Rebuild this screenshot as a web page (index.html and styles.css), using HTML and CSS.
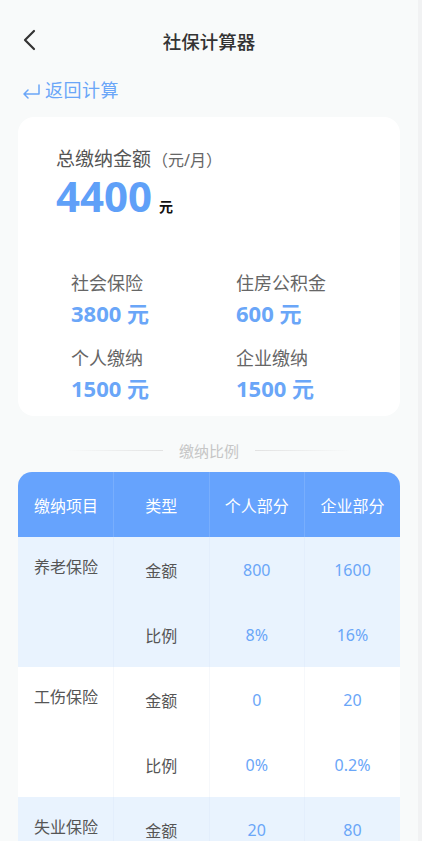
FILE: index.html
```html
<!DOCTYPE html>
<html lang="zh-CN">
<head>
    <meta charset="UTF-8">
    <meta name="viewport" content="width=device-width, initial-scale=1.0">
    <title>社保计算器</title>
    <link rel="stylesheet" href="styles.css">
</head>
<body>
<div class="page">
    <!-- 顶部导航 -->
    <div class="nav">
        <span class="nav-back">
            <svg width="16" height="22" viewBox="0 0 16 22"><path d="M12 2 L3 11 L12 20" fill="none" stroke="#333" stroke-width="2.2" stroke-linecap="round" stroke-linejoin="round"/></svg>
        </span>
        <div class="nav-title">社保计算器</div>
    </div>

    <!-- 返回计算 -->
    <div class="back-link">
        <svg width="20" height="16" viewBox="0 0 20 16"><path d="M18 2 V11 H3 M7 7 L3 11 L7 15" fill="none" stroke="#6aa6f8" stroke-width="1.5" stroke-linecap="round" stroke-linejoin="round"/></svg>
        <span>返回计算</span>
    </div>

    <!-- 总额卡片 -->
    <div class="card">
        <div class="total-label">总缴纳金额<span class="unit-note">（元/月）</span></div>
        <div class="total-value"><span class="num">4400</span><span class="yuan">元</span></div>

        <div class="summary">
            <div class="item">
                <div class="item-label">社会保险</div>
                <div class="item-value">3800 元</div>
            </div>
            <div class="item">
                <div class="item-label">住房公积金</div>
                <div class="item-value">600 元</div>
            </div>
            <div class="item">
                <div class="item-label">个人缴纳</div>
                <div class="item-value">1500 元</div>
            </div>
            <div class="item">
                <div class="item-label">企业缴纳</div>
                <div class="item-value">1500 元</div>
            </div>
        </div>
    </div>

    <!-- 分隔标题 -->
    <div class="divider">
        <span class="line line-left"></span>
        <span class="divider-text">缴纳比例</span>
        <span class="line line-right"></span>
    </div>

    <!-- 比例表格 -->
    <div class="table-wrap">
        <table class="rate-table">
            <thead>
                <tr>
                    <th class="col-name">缴纳项目</th>
                    <th>类型</th>
                    <th>个人部分</th>
                    <th>企业部分</th>
                </tr>
            </thead>
            <tbody>
                <tr class="odd">
                    <td class="col-name" rowspan="2">养老保险</td>
                    <td class="type">金额</td>
                    <td class="val">800</td>
                    <td class="val">1600</td>
                </tr>
                <tr class="odd">
                    <td class="type">比例</td>
                    <td class="val">8%</td>
                    <td class="val">16%</td>
                </tr>
                <tr>
                    <td class="col-name" rowspan="2">工伤保险</td>
                    <td class="type">金额</td>
                    <td class="val">0</td>
                    <td class="val">20</td>
                </tr>
                <tr>
                    <td class="type">比例</td>
                    <td class="val">0%</td>
                    <td class="val">0.2%</td>
                </tr>
                <tr class="odd">
                    <td class="col-name" rowspan="2">失业保险</td>
                    <td class="type">金额</td>
                    <td class="val">20</td>
                    <td class="val">80</td>
                </tr>
                <tr class="odd">
                    <td class="type">比例</td>
                    <td class="val">0.5%</td>
                    <td class="val">2%</td>
                </tr>
            </tbody>
        </table>
    </div>
</div>
</body>
</html>
```

FILE: styles.css
```css
html {
    background: #f1f2f3;
}

body {
    margin: 0;
    font-family: "Noto Sans", "Noto Sans CJK SC", sans-serif;
    color: #333;
}

.page {
    width: 418px;
    min-height: 841px;
    background: #f8fafa;
    padding: 0 18px;
    box-sizing: border-box;
}

/* 导航 */
.nav {
    height: 84px;
    display: flex;
    align-items: center;
    justify-content: center;
    position: relative;
}

.nav-back {
    position: absolute;
    left: 4px;
    top: 29px;
    height: 22px;
}

.nav-title {
    font-size: 18.5px;
    font-weight: 500;
    color: #333;
    margin-top: -2px;
}

.back-link {
    display: flex;
    align-items: center;
    gap: 4px;
    color: #6aa6f8;
    font-size: 18px;
    letter-spacing: 0.5px;
    line-height: 16px;
    margin-left: 3px;
    margin-top: -2px;
    height: 16px;
}

.back-link svg {
    margin-top: 1px;
}

/* 卡片 */
.card {
    margin-top: 19px;
    background: #fff;
    border-radius: 16px;
    padding: 31px 0 11px 38px;
}

.total-label {
    font-size: 19px;
    color: #555;
    line-height: 22px;
}

.unit-note {
    font-size: 16px;
    color: #666;
    margin-left: 1px;
}

.total-value {
    display: flex;
    align-items: baseline;
}

.total-value .num {
    font-size: 42px;
    font-weight: 700;
    color: #5fa0f8;
    line-height: 50px;
}

.total-value .yuan {
    font-size: 14px;
    font-weight: 700;
    color: #111;
    margin-left: 7px;
}

.summary {
    display: grid;
    grid-template-columns: 165px 1fr;
    row-gap: 15px;
    margin-top: 49px;
    padding-left: 15px;
}

.item-label {
    font-size: 18px;
    color: #666;
    line-height: 26px;
}

.item-value {
    font-size: 22px;
    font-weight: 700;
    color: #6aa6f8;
    line-height: 34px;
}

/* 分隔 */
.divider {
    display: flex;
    align-items: center;
    justify-content: center;
    gap: 16px;
    height: 68px;
}

.line {
    height: 1px;
    width: 98px;
}

.line-left {
    background: linear-gradient(to right, rgba(220, 220, 220, 0), #e2e2e2);
}

.line-right {
    background: linear-gradient(to left, rgba(220, 220, 220, 0), #e2e2e2);
}

.divider-text {
    font-size: 15px;
    color: #c6c6c6;
}

/* 表格 */
.table-wrap {
    border-radius: 14px 14px 0 0;
    overflow: hidden;
    margin-top: -12px;
}

.rate-table {
    width: 100%;
    border-collapse: collapse;
    table-layout: fixed;
    font-size: 16px;
}

.rate-table th {
    background: #66a3fd;
    color: #fff;
    font-weight: 400;
    height: 65px;
    padding: 0;
    border-right: 1px solid #78aefd;
    text-align: center;
}

.rate-table th:last-child,
.rate-table td:last-child {
    border-right: none;
}

.rate-table td {
    height: 65px;
    padding: 0;
    text-align: center;
    background: #fff;
    border-right: 1px solid #f6f8fb;
}

.rate-table tr.odd td {
    background: #e9f3fe;
    border-right-color: #e3eefc;
}

.rate-table .col-name {
    text-align: left;
    padding-left: 16px;
}

.rate-table td.col-name {
    vertical-align: top;
    padding-top: 19px;
    color: #555;
    line-height: 22px;
}

.type {
    color: #555;
}

.val {
    color: #6aa6f8;
}
```
